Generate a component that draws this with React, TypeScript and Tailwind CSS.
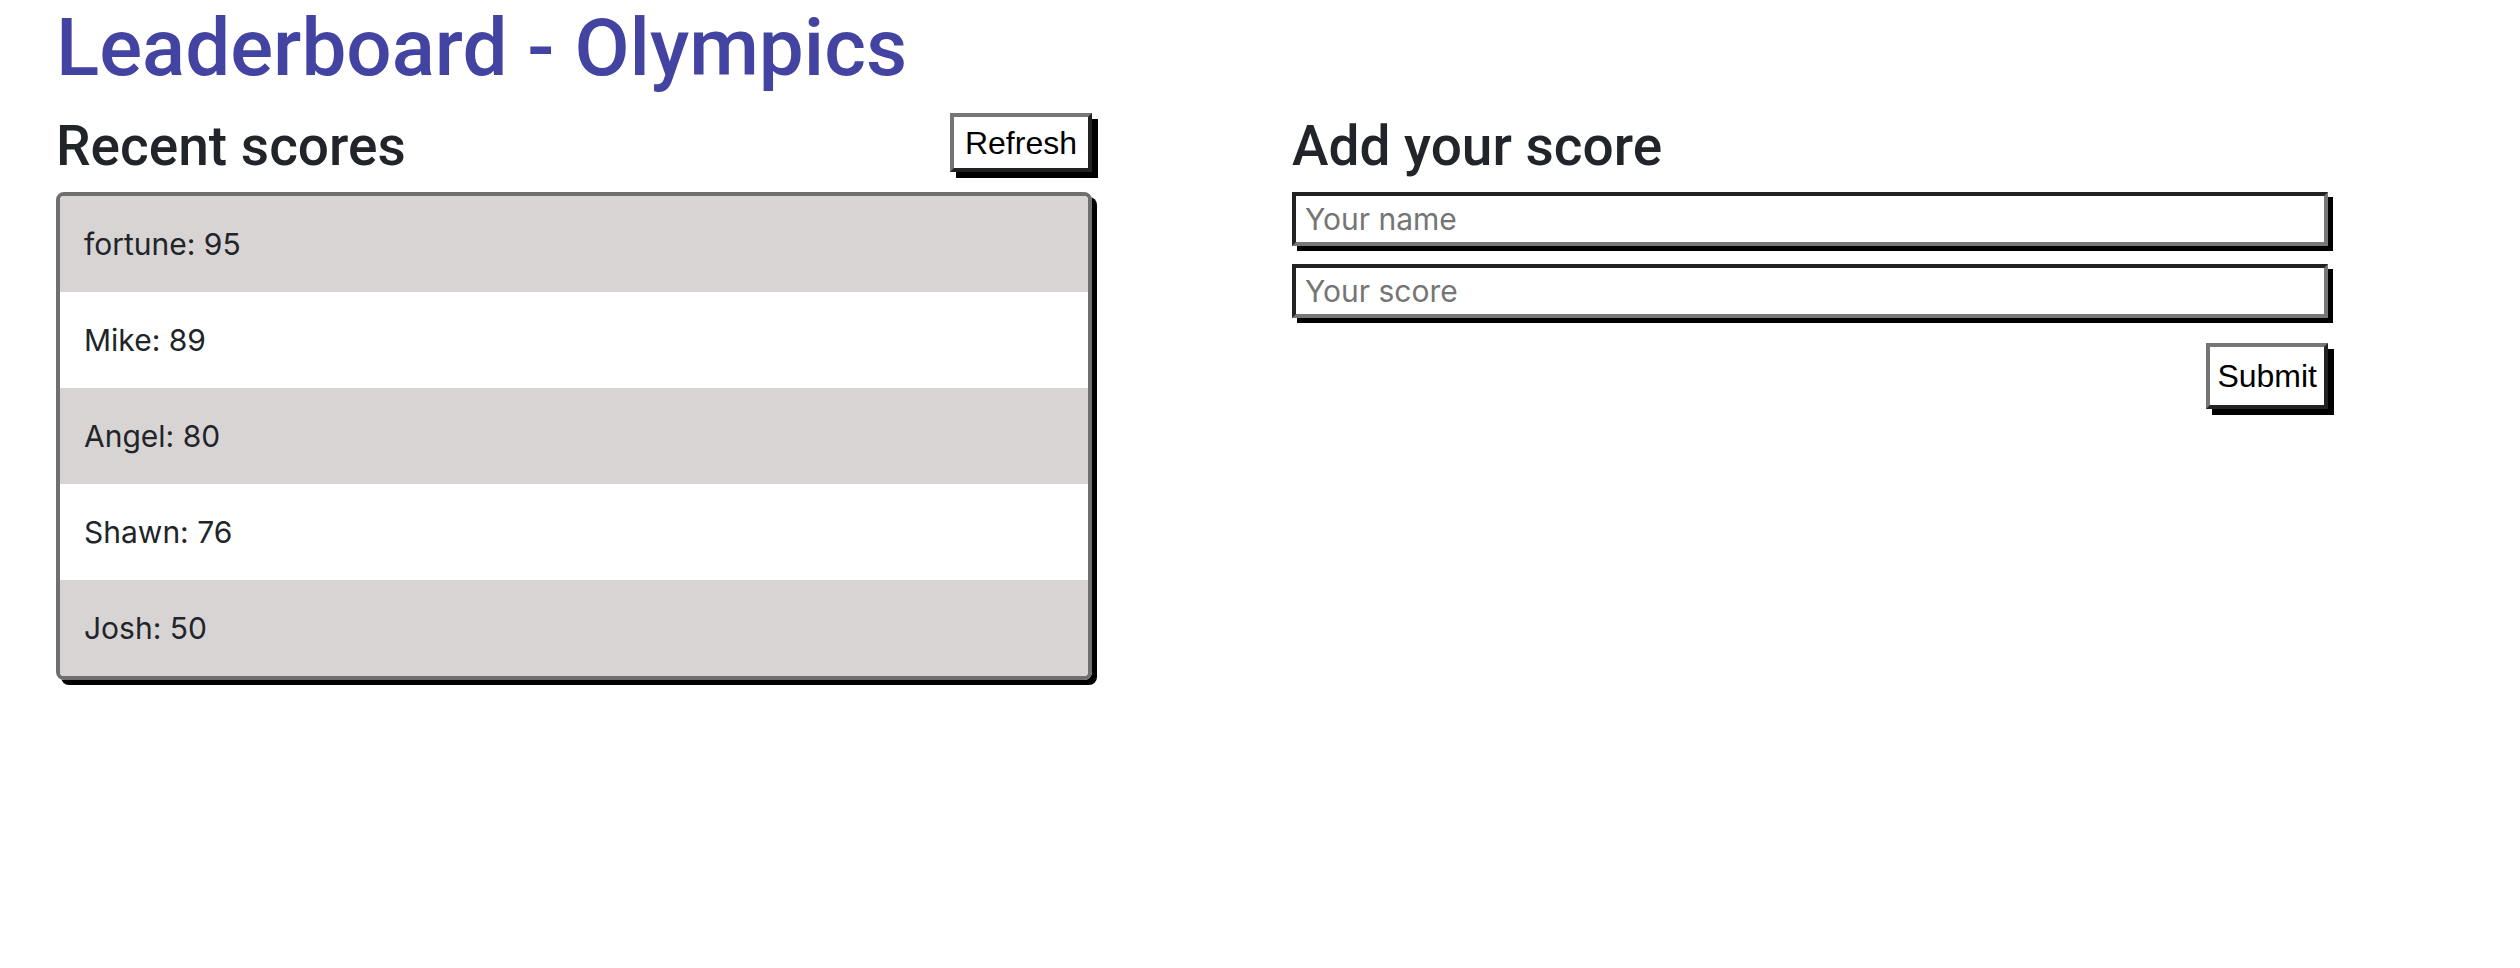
import React from "react";

const scores = [
  { name: "fortune", score: 95 },
  { name: "Mike", score: 89 },
  { name: "Angel", score: 80 },
  { name: "Shawn", score: 76 },
  { name: "Josh", score: 50 },
];

export default function App() {
  return (
    <div className="min-h-screen bg-white pl-[56px] font-['Inter',sans-serif] text-[#212529]">
      <h1 className="font-['Roboto',Arial,sans-serif] text-[80px] font-medium leading-[96px] text-[#4343a1]">
        Leaderboard - Olympics
      </h1>

      <div className="mt-[17px] flex gap-[200px]">
        {/* Recent scores */}
        <section className="w-[1036px]">
          <div className="flex items-start justify-between">
            <h2 className="mt-[2px] font-['Roboto',Arial,sans-serif] text-[55px] font-medium leading-[62px]">
              Recent scores
            </h2>
            <button className="flex h-[59px] items-center border-4 border-t-[#767676] border-l-[#767676] border-r-[#222] border-b-[#222] bg-white px-[11px] font-['Liberation_Sans',Arial,sans-serif] text-[32px] text-black shadow-[6px_6px_0_#000]">
              Refresh
            </button>
          </div>
          <ul className="mt-[15px] overflow-hidden rounded-lg border-4 border-[#6f6f6f] shadow-[5px_5px_0_#000]">
            {scores.map((s, i) => (
              <li
                key={s.name}
                className={
                  i % 2 === 0
                    ? "bg-[#d8d4d4] px-[24px] py-[28px] text-[30px] leading-[40px]"
                    : "bg-white px-[24px] py-[28px] text-[30px] leading-[40px]"
                }
              >
                {s.name}: {s.score}
              </li>
            ))}
          </ul>
        </section>

        {/* Add your score */}
        <section className="flex w-[1036px] flex-col">
          <h2 className="mt-[2px] font-['Roboto',Arial,sans-serif] text-[55px] font-medium leading-[62px]">
            Add your score
          </h2>
          <input
            type="text"
            placeholder="Your name"
            className="mt-[15px] h-[54px] w-full border-4 border-t-[#222] border-l-[#222] border-r-[#777] border-b-[#777] bg-white px-[9px] text-[30px] outline-none shadow-[5px_5px_0_#000] placeholder:text-[#757575]"
          />
          <input
            type="text"
            placeholder="Your score"
            className="mt-[18px] h-[54px] w-full border-4 border-t-[#222] border-l-[#222] border-r-[#777] border-b-[#777] bg-white px-[9px] text-[30px] outline-none shadow-[5px_5px_0_#000] placeholder:text-[#757575]"
          />
          <button className="mt-[25px] flex h-[66px] items-center self-end border-4 border-t-[#767676] border-l-[#767676] border-r-[#222] border-b-[#222] bg-white px-[7px] font-['Liberation_Sans',Arial,sans-serif] text-[32px] text-black shadow-[6px_6px_0_#000]">
            Submit
          </button>
        </section>
      </div>
    </div>
  );
}
